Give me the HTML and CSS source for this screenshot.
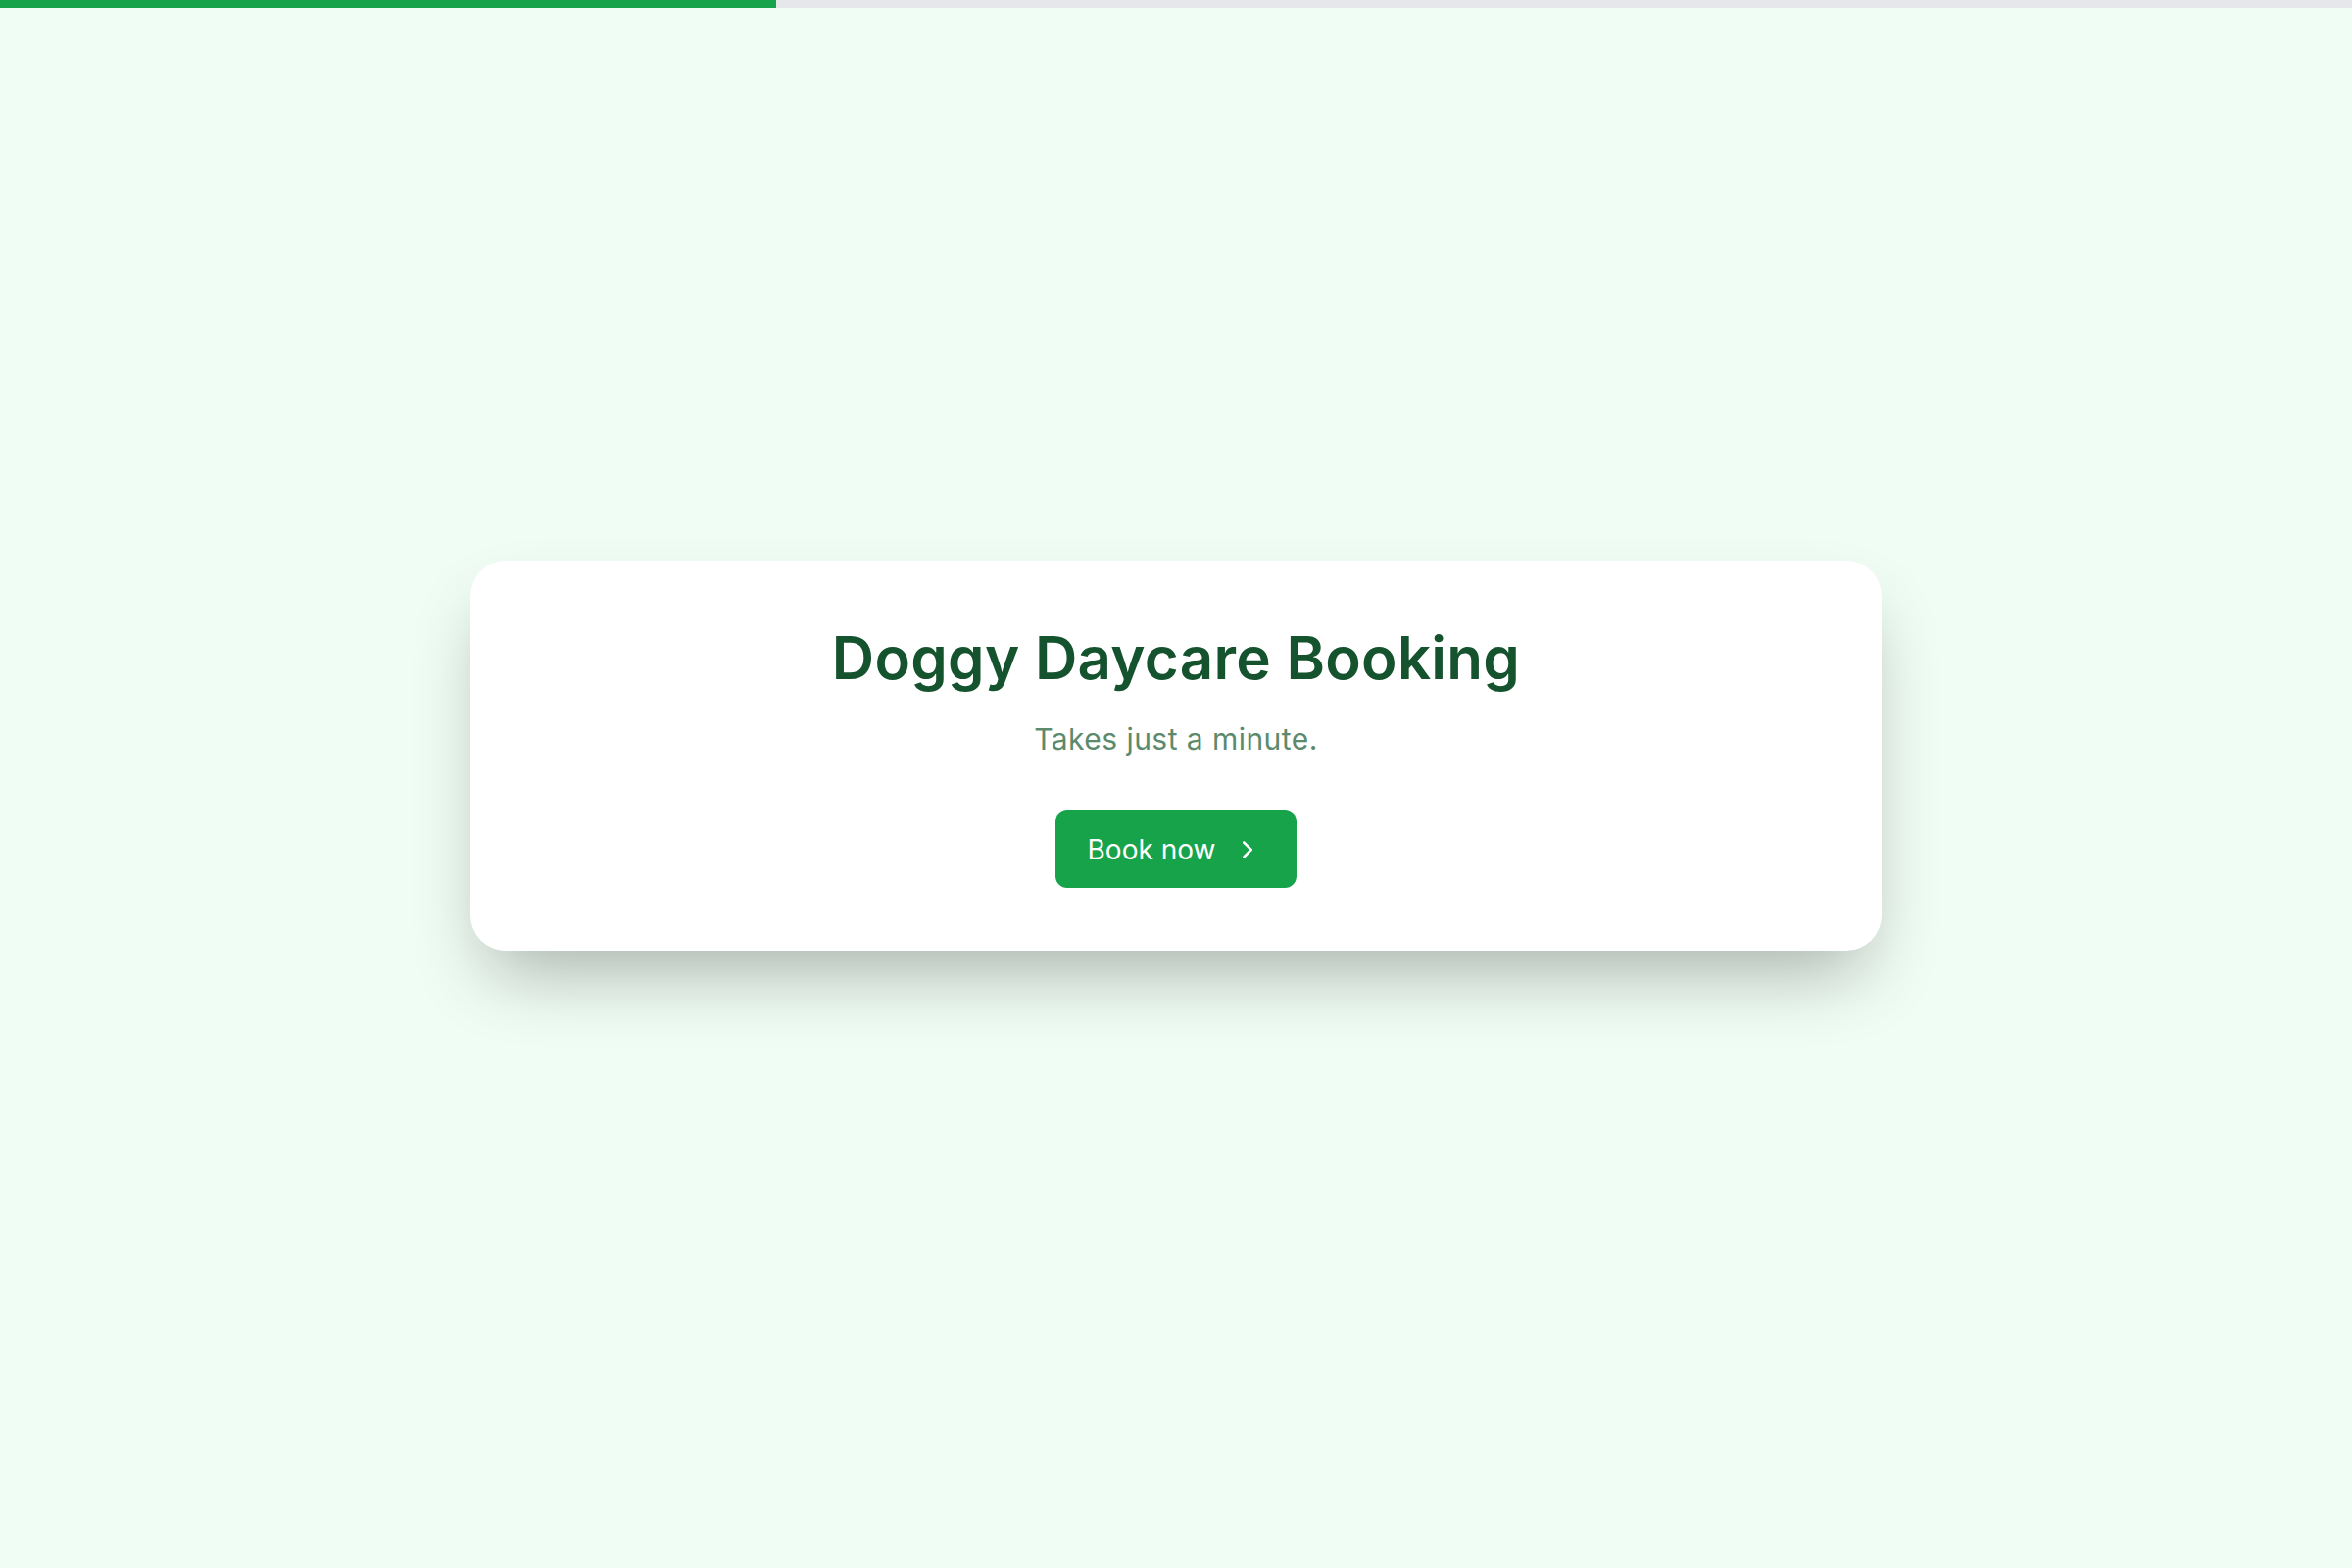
FILE: index.html
```html
<!DOCTYPE html>
<html lang="en">
<head>
    <meta charset="UTF-8">
    <meta name="viewport" content="width=device-width, initial-scale=1.0">
    <title>Doggy Daycare Booking</title>
    <link rel="stylesheet" href="styles.css">
</head>
<body>
    <div class="progress">
        <div class="progress-fill" style="width: 33%"></div>
    </div>

    <main class="page">
        <section class="card">
            <h1 class="card-title">Doggy Daycare Booking</h1>
            <p class="card-sub">Takes just a minute.</p>
            <button type="button" class="book-btn">
                <span>Book now</span>
                <svg class="chev" viewBox="0 0 24 24" fill="none" stroke="currentColor" stroke-width="2" stroke-linecap="round" stroke-linejoin="round">
                    <path d="m9 18 6-6-6-6"/>
                </svg>
            </button>
        </section>
    </main>
</body>
</html>
```

FILE: styles.css
```css
:root {
    --primary-color: #16a34a;
    --bg-color: #f0fdf4;
    --title-color: #14532d;
    --muted-color: #5b8a6c;
    --track-color: #e5e7eb;
}

* {
    box-sizing: border-box;
}

body {
    font-family: 'Inter', 'Open Sans', sans-serif;
    background-color: var(--bg-color);
    margin: 0;
    min-height: 100vh;
}

.progress {
    height: 8px;
    background: var(--track-color);
}

.progress-fill {
    height: 100%;
    background: var(--primary-color);
}

.page {
    min-height: calc(100vh - 8px);
    display: flex;
    align-items: center;
    justify-content: center;
    padding-bottom: 66px;
}

.card {
    width: 1440px;
    background: #fff;
    border-radius: 36px;
    box-shadow: 0 38px 75px -18px rgba(0, 0, 0, 0.3);
    padding: 63px 48px 64px;
    display: flex;
    flex-direction: column;
    align-items: center;
    text-align: center;
}

.card-title {
    margin: 0;
    font-size: 60px;
    line-height: 72px;
    font-weight: 600;
    letter-spacing: 0.005em;
    color: var(--title-color);
}

.card-sub {
    margin: 25px 0 0;
    font-size: 30px;
    line-height: 45px;
    letter-spacing: 0.015em;
    color: var(--muted-color);
}

.book-btn {
    margin-top: 50px;
    height: 79px;
    padding: 0 35px 0 33px;
    display: inline-flex;
    align-items: center;
    gap: 18px;
    border: none;
    border-radius: 12px;
    background-color: var(--primary-color);
    color: #fff;
    font-family: inherit;
    font-size: 28px;
    font-weight: 400;
    cursor: pointer;
}

.chev {
    width: 30px;
    height: 30px;
}
```
